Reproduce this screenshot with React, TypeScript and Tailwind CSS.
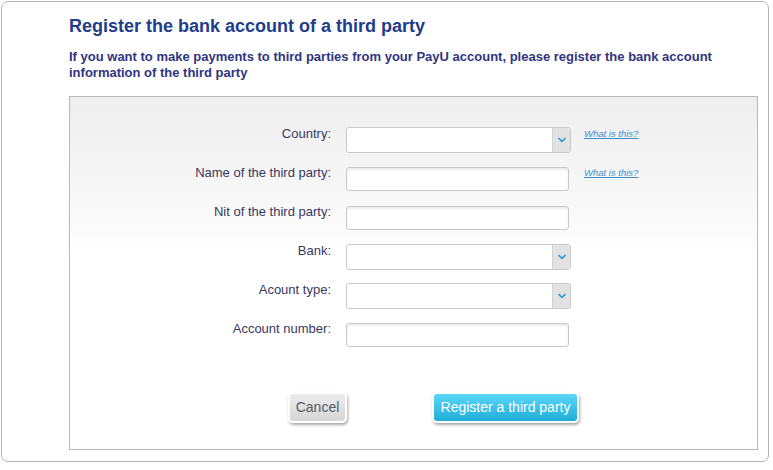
import { ChevronDown } from 'lucide-react';

type Field = { label: string; kind: 'select' | 'input'; help?: boolean };

const fields: Field[] = [
  { label: 'Country:', kind: 'select', help: true },
  { label: 'Name of the third party:', kind: 'input', help: true },
  { label: 'Nit of the third party:', kind: 'input' },
  { label: 'Bank:', kind: 'select' },
  { label: 'Acount type:', kind: 'select' },
  { label: 'Account number:', kind: 'input' },
];

function SelectBox() {
  return (
    <div className="flex h-[26px] w-[225px] overflow-hidden rounded-[3px] border border-[#c9c9c9] bg-white">
      <div className="flex-1" />
      <div className="flex w-[18px] items-center justify-center border-l border-[#d2d2d2] bg-[#e2e2e2]">
        <ChevronDown className="h-3 w-3 text-[#2b9ad9]" strokeWidth={3.5} />
      </div>
    </div>
  );
}

function TextBox() {
  return (
    <div className="mt-[1px] h-[24px] w-[223px] rounded-[3px] border border-[#c9c9c9] bg-white shadow-[inset_0_2px_2px_rgba(0,0,0,0.08)]" />
  );
}

export default function App() {
  return (
    <div className="h-[470px] w-[773px] bg-white p-[1px] font-['Liberation_Sans',Arial,sans-serif]">
      <div className="h-[461px] w-[768px] rounded-[7px] border border-[#b4b4b4] pl-[67px] pt-[12px]">
        <h1 className="text-[18px] font-bold leading-[24px] text-[#1f3d8a]">
          Register the bank account of a third party
        </h1>
        <p className="mt-[11px] w-[660px] text-[13px] font-bold leading-[16px] text-[#2f3580]">
          If you want to make payments to third parties from your PayU account, please register the bank account
          information of the third party
        </p>

        {/* Form panel */}
        <div className="mt-[15px] h-[354px] w-[689px] border border-[#b9b9b9] bg-[linear-gradient(to_bottom,#eeeeee_0%,#fafafa_35%,#ffffff_45%)]">
          <div className="flex flex-col gap-[13px] pt-[30px]">
            {fields.map((f) => (
              <div key={f.label} className="flex h-[26px] items-start">
                <div className="w-[261px] text-right text-[13px] leading-[14px] text-[#383862]">
                  {f.label}
                </div>
                <div className="ml-[15px] w-[225px]">{f.kind === 'select' ? <SelectBox /> : <TextBox />}</div>
                {f.help && (
                  <a className="ml-[13px] mt-[1px] text-[9.5px] italic leading-[12px] text-[#3c8fd0] underline">
                    What is this?
                  </a>
                )}
              </div>
            ))}
          </div>

          <div className="mt-[44px] flex items-center pl-[218px]">
            <button className="h-[31px] w-[59px] rounded-[5px] border-2 border-white bg-[linear-gradient(to_bottom,#ececec,#d6d6d6)] text-[14px] text-[#555a66] shadow-[1px_2px_3px_rgba(0,0,0,0.35)]">
              Cancel
            </button>
            <button className="ml-[85px] h-[31px] w-[147px] rounded-[5px] border-2 border-white bg-[linear-gradient(to_bottom,#5bd6f8,#1eaed8)] text-[14px] text-white shadow-[1px_2px_3px_rgba(0,0,0,0.35)]">
              Register a third party
            </button>
          </div>
        </div>
      </div>
    </div>
  );
}
